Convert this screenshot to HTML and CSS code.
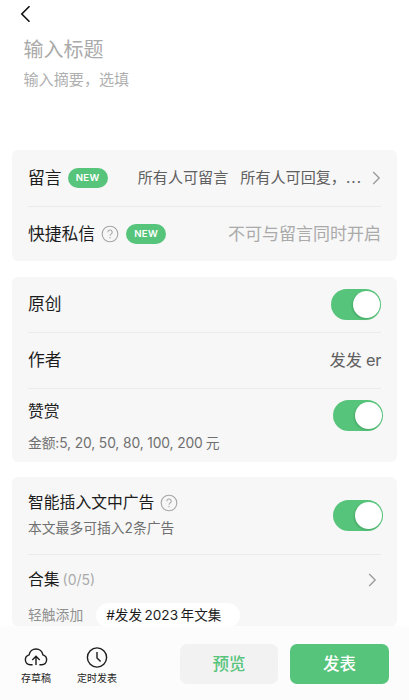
FILE: index.html
```html
<!DOCTYPE html>
<html lang="zh-CN">
<head>
<meta charset="utf-8">
<title>发表</title>
<link rel="stylesheet" href="styles.css">
</head>
<body>
<main class="page">
  <header class="head">
    <svg class="back" width="11" height="18" viewBox="0 0 11 18"><path d="M9.5 1.2 1.8 9l7.7 7.8"/></svg>
    <div class="title">输入标题</div>
    <div class="summary">输入摘要，选填</div>
  </header>

  <section class="card">
    <div class="row row-comment">
      <span class="label">留言</span><span class="badge">NEW</span>
      <span class="value options"><span>所有人可留言</span><span>所有人可回复，<span class="dots">...</span></span></span>
      <svg class="chevron" width="9" height="14" viewBox="0 0 9 14"><path d="m1.2 1 6 6-6 6"/></svg>
    </div>
    <div class="row">
      <span class="label">快捷私信</span>
      <svg class="help" width="18" height="18" viewBox="0 0 18 18"><circle cx="9" cy="9" r="7.8"/><path d="M6.8 7.2a2.2 2.2 0 1 1 3.3 1.9c-.8.5-1.1.9-1.1 1.7"/><path d="M9 12v1.2"/></svg>
      <span class="badge">NEW</span>
      <span class="value muted">不可与留言同时开启</span>
    </div>
  </section>

  <section class="card">
    <div class="row"><span class="label">原创</span><span class="switch"></span></div>
    <div class="row"><span class="label">作者</span><span class="value author">发发<span class="latin">er</span></span></div>
    <div class="row row-reward">
      <div><div class="label small">赞赏</div><div class="note amounts">金额:5, 20, 50, 80, 100, 200<span class="unit">元</span></div></div>
      <span class="switch shifted"></span>
    </div>
  </section>

  <section class="card">
    <div class="row row-ads">
      <div>
        <div class="line"><span class="label small">智能插入文中广告</span>
          <svg class="help" width="18" height="18" viewBox="0 0 18 18"><circle cx="9" cy="9" r="7.8"/><path d="M6.8 7.2a2.2 2.2 0 1 1 3.3 1.9c-.8.5-1.1.9-1.1 1.7"/><path d="M9 12v1.2"/></svg>
        </div>
        <div class="note">本文最多可插入2条广告</div>
      </div>
      <span class="switch shifted"></span>
    </div>
    <div class="row row-album">
      <span class="label small">合集</span><span class="count">(0/5)</span>
      <svg class="chevron" width="9" height="14" viewBox="0 0 9 14"><path d="m1.2 1 6 6-6 6"/></svg>
    </div>
    <div class="tags"><span class="hint">轻触添加</span><span class="chip">#发发<span class="year">2023</span>年文集</span></div>
  </section>
</main>

<footer class="bar">
  <div class="tool draft">
    <svg width="24" height="22" viewBox="0 0 24 22"><path d="M8.6 18.8H6.2a5.1 5.1 0 0 1-1.1-10 7 7 0 0 1 13.8 0 5.1 5.1 0 0 1-1.1 10h-2.4"/><path d="M12 19v-8.4M8.3 14 12 10.3l3.7 3.7"/></svg>
    <span>存草稿</span>
  </div>
  <div class="tool timer">
    <svg width="24" height="22" viewBox="0 0 24 22"><circle cx="12" cy="11.5" r="9.6"/><path d="M12 6v6l3.6 3.6"/></svg>
    <span>定时发表</span>
  </div>
  <div class="button preview">预览</div>
  <div class="button publish">发表</div>
</footer>
</body>
</html>
```
FILE: styles.css
```css
* { box-sizing: border-box; }

body {
  margin: 0;
  height: 700px;
  display: flex;
  flex-direction: column;
  overflow: hidden;
  background: #fff;
  color: #1c1c1c;
  font-family: Inter, "Noto Sans CJK SC", sans-serif;
  line-height: 20px;
  white-space: nowrap;
}

svg {
  display: block;
  flex: none;
  fill: none;
  stroke: currentColor;
}

.page {
  flex: 1;
  min-height: 0;
  overflow: hidden;
  padding: 0 12px;
}

.head { height: 150px; padding: 5px 0 0 11.5px; }
.back { margin-left: -4px; color: #111; stroke-width: 1.6; }
.title { margin-top: 13px; font-size: 20px; line-height: 28px; color: #aaa; }
.summary { margin-top: 6px; font-size: 15.1px; color: #b0b0b0; }

.card {
  margin-bottom: 15.5px;
  padding: 0 16px;
  border-radius: 6px;
  background: #f7f7f7;
}

.row { display: flex; align-items: center; height: 55.5px; }
.row + .row { border-top: 1px solid #ebebeb; }

.label { font-size: 16.8px; }
.label.small { font-size: 15.8px; }

.badge {
  width: 40px;
  height: 20px;
  margin-left: 6px;
  border-radius: 10px;
  background: #57c47b;
  color: #fff;
  font-size: 9.6px;
  font-weight: 600;
  letter-spacing: .3px;
  text-align: center;
}

.help { margin-left: 6px; color: #a6a6a6; stroke-width: 1.1; }
.help + .badge { margin-left: 7px; }
.value { margin-left: auto; font-size: 17px; color: #606060; }
.value.muted { color: #aaa; }
.value.author { font-size: 16.3px; }
.latin { margin-left: 4px; letter-spacing: -.3px; }
.options { display: flex; gap: 12px; font-size: 15.1px; }
.dots { letter-spacing: 1px; }
.chevron { margin-left: 10px; color: #999; stroke-width: 1.3; }

.switch {
  width: 50px;
  height: 31px;
  margin-left: auto;
  padding: 2px;
  border-radius: 16px;
  background: #57c47b;
}
.switch::before {
  content: "";
  display: block;
  width: 27px;
  height: 27px;
  margin-left: 19.5px;
  border-radius: 50%;
  background: #fff;
  box-shadow: -1px 1px 2px rgba(0, 60, 20, .2);
}
.switch.shifted { margin-right: -2px; }

.row-reward { align-items: flex-start; height: 74px; padding-top: 13px; }
.row-reward .switch { margin-top: -2px; }
.row-reward .note { margin-top: 11px; }
.note { font-size: 13.8px; color: #707070; }
.amounts { letter-spacing: -.12px; }
.unit { margin-left: 3px; }

.row-ads { height: 77px; }
.row-ads .note { margin-top: 5px; }
.line { display: flex; align-items: center; }

.row-album { height: 50px; }
.count { margin-left: 3px; font-size: 14px; color: #aaa; }
.row-album .chevron { margin-left: auto; margin-right: 4px; }

.tags { display: flex; align-items: center; height: 22px; }
.hint { font-size: 13.8px; color: #909090; }
.chip {
  width: 144px;
  height: 25px;
  margin-left: 13px;
  padding-left: 10px;
  border-radius: 13px;
  background: #fff;
  font-size: 13.6px;
  line-height: 25px;
}
.year { margin: 0 2.5px; }

.bar {
  flex: none;
  position: relative;
  display: flex;
  height: 72px;
  padding: 16px 20px 0;
  background: #fcfcfc;
  box-shadow: 0 -1px 4px rgba(0, 0, 0, .025);
}
.tool {
  display: flex;
  flex-direction: column;
  align-items: center;
  width: 32px;
  padding-top: 2px;
  font-size: 10px;
}
.tool svg { stroke-width: 1.4; }
.tool span { line-height: 16px; margin-top: 2px; }
.timer { width: 42px; margin-left: 24px; }
.button {
  width: 98px;
  height: 40px;
  margin-left: 62px;
  border-radius: 7px;
  background: #f2f2f2;
  color: #57c47b;
  font-size: 16.5px;
  font-weight: 500;
  line-height: 40px;
  text-align: center;
}
.publish { width: 99px; margin-left: 12px; background: #57c47b; color: #fff; }
```
